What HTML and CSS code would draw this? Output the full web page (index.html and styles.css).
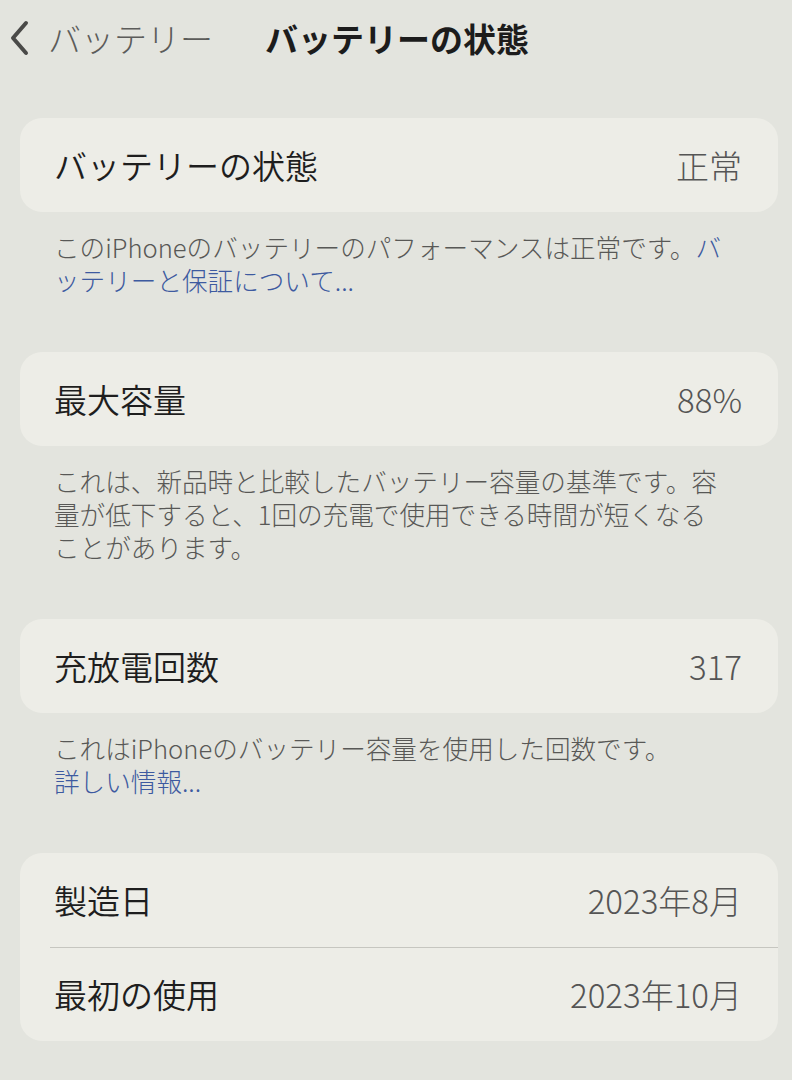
FILE: index.html
```html
<!DOCTYPE html>
<html lang="ja">
<head>
  <meta charset="UTF-8" />
  <meta name="viewport" content="width=device-width, initial-scale=1.0"/>
  <title>バッテリーの状態</title>
  <link rel="stylesheet" href="styles.css">
</head>
<body>

  <div class="nav-bar">
    <a class="nav-back" href="#">
      <svg class="nav-chevron" width="22" height="36" viewBox="0 0 22 36">
        <path d="M18 3 L5 18 L18 33" fill="none" stroke="#4a4a48" stroke-width="4" stroke-linecap="round" stroke-linejoin="round"/>
      </svg>
      <span>バッテリー</span>
    </a>
    <h1 class="nav-title">バッテリーの状態</h1>
  </div>

  <div class="settings">
    <div class="group">
      <div class="card">
        <div class="row">
          <span class="row-label">バッテリーの状態</span>
          <span class="row-value">正常</span>
        </div>
      </div>
      <p class="group-footer">このiPhoneのバッテリーのパフォーマンスは正常です。<a href="#">バ<br>ッテリーと保証について...</a></p>
    </div>

    <div class="group">
      <div class="card">
        <div class="row">
          <span class="row-label">最大容量</span>
          <span class="row-value">88%</span>
        </div>
      </div>
      <p class="group-footer">これは、新品時と比較したバッテリー容量の基準です。容<br>量が低下すると、1回の充電で使用できる時間が短くなる<br>ことがあります。</p>
    </div>

    <div class="group">
      <div class="card">
        <div class="row">
          <span class="row-label">充放電回数</span>
          <span class="row-value">317</span>
        </div>
      </div>
      <p class="group-footer">これはiPhoneのバッテリー容量を使用した回数です。<br><a href="#">詳しい情報...</a></p>
    </div>

    <div class="group">
      <div class="card">
        <div class="row">
          <span class="row-label">製造日</span>
          <span class="row-value">2023年8月</span>
        </div>
        <div class="row">
          <span class="row-label">最初の使用</span>
          <span class="row-value">2023年10月</span>
        </div>
      </div>
    </div>
  </div>

</body>
</html>
```

FILE: styles.css
```css
body {
margin: 0;
background-color: #e3e4de;
font-family: "Noto Sans CJK JP", "Noto Sans", sans-serif;
color: #222;
}

.nav-bar {
display: flex;
align-items: center;
height: 76px;
padding-left: 8px;
}

.nav-back {
display: flex;
align-items: center;
gap: 18px;
color: #5c5c5a;
text-decoration: none;
font-size: 33px;
font-weight: 300;
}

.nav-chevron {
display: block;
}

.nav-title {
margin: 0 0 0 52px;
font-size: 33px;
font-weight: 700;
color: #1c1c1c;
}

.settings {
padding: 42px 14px 0 20px;
}

.group {
margin-bottom: 56px;
}

.group:last-child {
margin-bottom: 0;
}

.card {
background-color: #ededE7;
border-radius: 22px;
overflow: hidden;
}

.row {
display: flex;
justify-content: space-between;
align-items: center;
height: 94px;
padding: 0 36px 0 34px;
font-size: 33px;
}

/* hairline between rows, inset from the left edge */
.row + .row {
background: linear-gradient(#c6c6c0, #c6c6c0) no-repeat 30px 0 / 100% 1px;
}

.row-label {
color: #1e1e1e;
font-weight: 350;
}

.row-value {
color: #555;
font-weight: 300;
}

.group-footer {
margin: 0;
padding: 18px 20px 0 34px;
font-size: 25.6px;
line-height: 33px;
color: #585856;
font-weight: 300;
}

.group-footer a {
color: #3d5aa0;
text-decoration: none;
}
```
